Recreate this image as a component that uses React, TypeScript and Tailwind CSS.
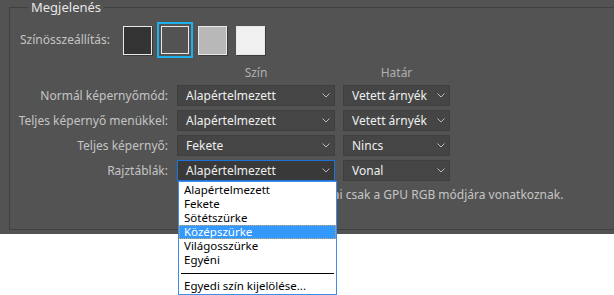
import React from 'react';

const font = { fontFamily: '"Noto Sans", "Open Sans", sans-serif' };

const Chevron = () => (
  <svg width="8" height="5" viewBox="0 0 8 5" className="shrink-0">
    <path d="M0.5 0.5 L4 4 L7.5 0.5" fill="none" stroke="#b9b9b9" strokeWidth="1" />
  </svg>
);

const Select: React.FC<{ value: string; width: string; focused?: boolean }> = ({ value, width, focused }) => (
  <div
    className={`${width} h-[21px] flex items-center justify-between pl-[8px] pr-[4px] text-[12px] text-[#efefef] border ${
      focused ? 'border-[#1b74d8] bg-[#393939]' : 'border-[#3f3f3f] bg-[#454545]'
    }`}
  >
    <span className="leading-none">{value}</span>
    <Chevron />
  </div>
);

const rows = [
  { label: 'Normál képernyőmód:', color: 'Alapértelmezett', border: 'Vetett árnyék' },
  { label: 'Teljes képernyő menükkel:', color: 'Alapértelmezett', border: 'Vetett árnyék' },
  { label: 'Teljes képernyő:', color: 'Fekete', border: 'Nincs' },
  { label: 'Rajztáblák:', color: 'Alapértelmezett', border: 'Vonal', focused: true },
];

const options = ['Alapértelmezett', 'Fekete', 'Sötétszürke', 'Középszürke', 'Világosszürke', 'Egyéni'];

export default function App() {
  return (
    <div className="relative w-[614px] h-[295px] bg-white overflow-hidden" style={font}>
      <div className="h-[234px] bg-[#535353] pt-[7px] pl-[9px]">
        <div className="relative h-[223px] border border-r-0 border-[#404040]">
          <span className="absolute -top-[9px] left-[18px] px-[3px] bg-[#535353] text-[13px] leading-[16px] text-[#e6e6e6]">
            Megjelenés
          </span>

          {/* Colour theme swatches */}
          <div className="flex items-center mt-[14px] h-[36px]">
            <span className="w-[113px] pl-[10px] text-[12px] text-[#c4c4c4]">Színösszeállítás:</span>
            <div className="flex items-center gap-[5px]">
              <div className="w-[29px] h-[29px] bg-[#333333] border border-[#e8e8e8] shadow-[1px_1px_0_#3a3a3a]" />
              <div className="w-[36px] h-[36px] border-2 border-[#1db0ee] p-[2px]">
                <div className="w-full h-full bg-[#535353] border border-[#e8e8e8]" />
              </div>
              <div className="w-[29px] h-[29px] bg-[#b8b8b8] border border-[#e8e8e8] shadow-[1px_1px_0_#3a3a3a]" />
              <div className="ml-[4px] w-[29px] h-[29px] bg-[#f0f0f0] border border-[#e8e8e8] shadow-[1px_1px_0_#3a3a3a]" />
            </div>
          </div>

          {/* Column headers */}
          <div className="grid grid-cols-[159px_158px_107px] gap-x-[8px] mt-[7px] text-[12px] text-[#b0b0b0] leading-[16px]">
            <span />
            <span className="text-center">Szín</span>
            <span className="text-center">Határ</span>
          </div>

          <div className="flex flex-col gap-[4px] mt-[4px]">
            {rows.map((r) => (
              <div key={r.label} className="grid grid-cols-[159px_158px_107px] gap-x-[8px] items-center">
                <span className="text-right text-[12px] text-[#c4c4c4] leading-none pr-px">{r.label}</span>
                <Select value={r.color} width="w-[158px]" focused={r.focused} />
                <Select value={r.border} width="w-[107px]" />
              </div>
            ))}
          </div>

          <div className="mt-[6px] pl-[207px] text-[12px] text-[#c4c4c4] leading-[16px] whitespace-nowrap">
            A rajztáblák beállításai csak a GPU RGB módjára vonatkoznak.
          </div>
        </div>
      </div>

      {/* Open dropdown list */}
      <div
        className="absolute left-[178px] top-[181px] w-[159px] h-[114px] bg-white border border-[#3c8ee6] text-[11.5px] text-black leading-[14px]"
        style={font}
      >
        <div className="pt-[1px]">
          {options.map((o) => (
            <div
              key={o}
              className={`h-[14px] pl-[5px] ${
                o === 'Középszürke' ? 'bg-[#3399ff] text-white outline outline-1 outline-dotted outline-[#c9a86a] -outline-offset-1' : ''
              }`}
            >
              {o}
            </div>
          ))}
        </div>
        <div className="mx-[2px] mt-[6px] border-t border-black" />
        <div className="h-[14px] pl-[5px] mt-[5px]">Egyedi szín kijelölése...</div>
      </div>
    </div>
  );
}
